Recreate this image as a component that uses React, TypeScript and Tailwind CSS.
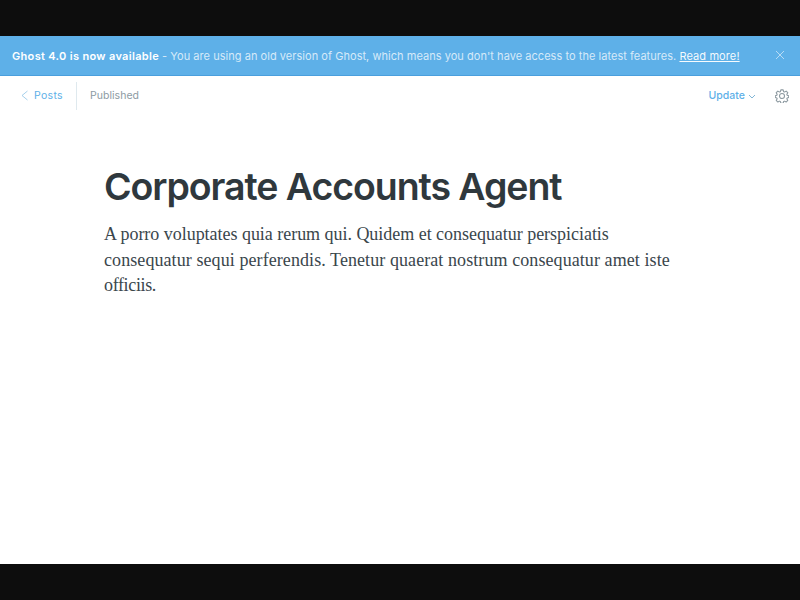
export default function App() {
  return (
    <div className="flex h-[600px] w-[800px] flex-col overflow-hidden bg-[#0d0d0d] py-9 font-['Inter',sans-serif]">
      <div className="flex h-10 shrink-0 items-center justify-between border-b border-[#4a9fdd] bg-[#5eb0e8] pr-[15px] pl-3 text-[11px] text-white">
        <p className="pt-0.5 whitespace-nowrap text-white/75">
          <b className="font-semibold tracking-[0.32px] text-white">Ghost 4.0 is now available</b>
          <span className="tracking-[0.04px]"> - You are using an old version of Ghost, which means you don't have access to the latest features. </span>
          <a className="tracking-[0.1px] text-white/95 underline">Read more!</a>
        </p>
        <svg className="mb-px" width="10" height="10" viewBox="0 0 10 10" stroke="white" strokeOpacity="0.7" strokeWidth="0.8"><path d="M1 1l8 8M9 1L1 9" /></svg>
      </div>
      <main className="flex flex-1 flex-col bg-white">
        <header className="flex h-10 items-center justify-between pr-[11.5px] pl-5">
          <div className="flex items-center text-[10.5px]">
            <svg className="mr-1" width="10" height="12" viewBox="0 0 10 12" fill="none" stroke="#8fc4e6" strokeWidth="0.8"><path d="M7.500 1L2 5.500l5.500 4.500" /></svg>
            <span className="w-[29px] tracking-[0.3px] text-[#5eb0e8]">Posts</span>
            <span className="mr-[13px] ml-[13px] h-7 w-px bg-[#dfe9ee]" />
            <span className="tracking-[0.03px] text-[#8d9ba3]">Published</span>
          </div>
          <div className="flex items-center text-[10.5px] text-[#5eb0e8]">
            <span className="w-[39px] font-medium">Update</span>
            <svg className="mt-0.5" width="8" height="8" viewBox="0 0 8 8" fill="none" stroke="#82b6d6" strokeWidth="1"><path d="M1 2l3 3 3-3" /></svg>
            <svg className="mb-px ml-[19px]" width="14" height="14" viewBox="0 0 24 24" fill="none" stroke="#8b989f" strokeWidth="1.8" strokeLinejoin="round">
              <circle cx="12" cy="12" r="4.300" />
              <path d="M10 1.500h4l.8 3.100 1.500.6 2.800-1.600 2.800 2.800-1.600 2.800.6 1.500 2.600.8v3l-2.600.8-.6 1.500 1.600 2.800-2.800 2.800-2.800-1.600-1.500.6-.8 3.100h-4l-.8-3.100-1.500-.6-2.800 1.600-2.800-2.800 1.600-2.800-.6-1.500-2.600-.8v-3l2.600-.8.6-1.500-1.600-2.800 2.800-2.800 2.800 1.600 1.500-.6z" />
            </svg>
          </div>
        </header>
        <article className="px-[104px] pt-[50px]">
          <h1 className="text-[37.5px] leading-[42px] font-semibold tracking-[-1.07px] whitespace-nowrap text-[#2f383d]">Corporate Accounts Agent</h1>
          <p className="mt-[14px] w-[592px] font-['Liberation_Serif',serif] text-[18px] leading-[25.6px] whitespace-nowrap text-[#3a464c]">
            <span className="block tracking-[-0.03px]">A porro voluptates quia rerum qui. Quidem et consequatur perspiciatis</span>
            <span className="block tracking-[0.08px]">consequatur sequi perferendis. Tenetur quaerat nostrum consequatur amet iste</span>
            <span className="block tracking-[-0.35px]">officiis.</span>
          </p>
        </article>
      </main>
    </div>
  );
}
